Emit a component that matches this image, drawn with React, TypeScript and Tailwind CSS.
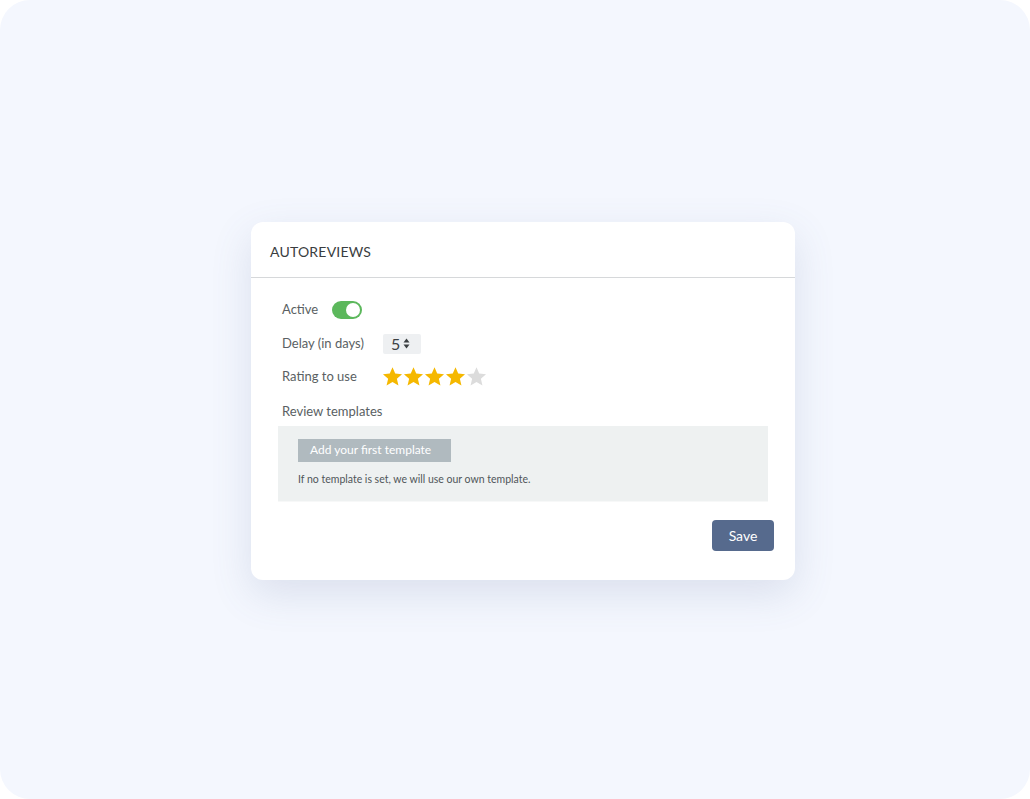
import React, { useState } from "react";

const Star: React.FC<{ filled: boolean }> = ({ filled }) => (
  <svg width="21" height="21" viewBox="0 0 24 24" className={filled ? "text-[#f5b800]" : "text-[#dcdcdc]"}>
    <path
      fill="currentColor"
      d="M12 1.5l3.1 7.2 7.8.7-5.9 5.2 1.8 7.7L12 18.2l-6.8 4.1 1.8-7.7-5.9-5.2 7.8-.7z"
    />
  </svg>
);

const App: React.FC = () => {
  const [active, setActive] = useState(true);
  const [rating] = useState(4);

  return (
    <div
      className="w-[1030px] h-[799px] bg-white"
      style={{ fontFamily: "Lato, 'Noto Sans', sans-serif" }}
    >
      <div className="w-full h-full bg-[#f4f7fe] rounded-[30px] flex items-center justify-center">
        <div className="w-[544px] h-[358px] ml-[16px] mt-[2px] bg-white rounded-[12px] shadow-[0_14px_40px_rgba(90,105,150,0.16)] flex flex-col">
          <div className="h-[56px] flex items-center px-[19px] pt-[5px] border-b border-[#d6d8da]">
            <span className="text-[14px] text-[#3a3d40] tracking-[0.2px]">AUTOREVIEWS</span>
          </div>
          <div className="flex flex-col px-[27px] pt-[22px] text-[13px] text-[#5a5f63]">
            <div className="flex items-center h-[20px]">
              <span className="w-[54px] pl-[4px]">Active</span>
              <button
                onClick={() => setActive(!active)}
                className={`w-[30px] h-[18px] rounded-full relative ${active ? "bg-[#5cb85c]" : "bg-gray-300"}`}
              >
                <span
                  className={`absolute top-[2px] w-[14px] h-[14px] rounded-full bg-white ${active ? "left-[14px]" : "left-[2px]"}`}
                />
              </button>
            </div>
            <div className="flex items-center h-[20px] mt-[14px]">
              <span className="w-[105px] pl-[4px]">Delay (in days)</span>
              <div className="w-[38px] h-[20px] bg-[#eef0f2] rounded-[2px] flex items-center pl-[8px] gap-[3px]">
                <span className="text-[16px] text-[#3c4043] leading-none">5</span>
                <svg width="7" height="11" viewBox="0 0 7 11" className="text-[#3c4043]">
                  <path d="M3.5 0.5L6.5 4.5H0.5Z M3.5 10.5L0.5 6.5H6.5Z" fill="currentColor" />
                </svg>
              </div>
            </div>
            <div className="flex items-center h-[22px] mt-[12px]">
              <span className="w-[104px] pl-[4px]">Rating to use</span>
              <div className="flex">
                {[1, 2, 3, 4, 5].map((i) => (
                  <Star key={i} filled={i <= rating} />
                ))}
              </div>
            </div>
            <div className="mt-[15px] pl-[4px] h-[16px] leading-[16px]">Review templates</div>
          </div>
          <div className="mx-[27px] mt-[7px] h-[76px] bg-[#eef1f1] border-b border-[#f7f8f8] flex flex-col px-[20px] pt-[13px]">
            <button className="w-[153px] h-[23px] bg-[#b0babf] text-white text-[12px] text-left pl-[12px]">
              Add your first template
            </button>
            <p className="text-[10.5px] text-[#50565a] mt-[10px]">If no template is set, we will use our own template.</p>
          </div>
          <div className="flex justify-end px-[21px] mt-[18px]">
            <button className="w-[62px] h-[31px] bg-[#566a8d] rounded-[4px] text-white text-[14px]">Save</button>
          </div>
        </div>
      </div>
    </div>
  );
};

export default App;
